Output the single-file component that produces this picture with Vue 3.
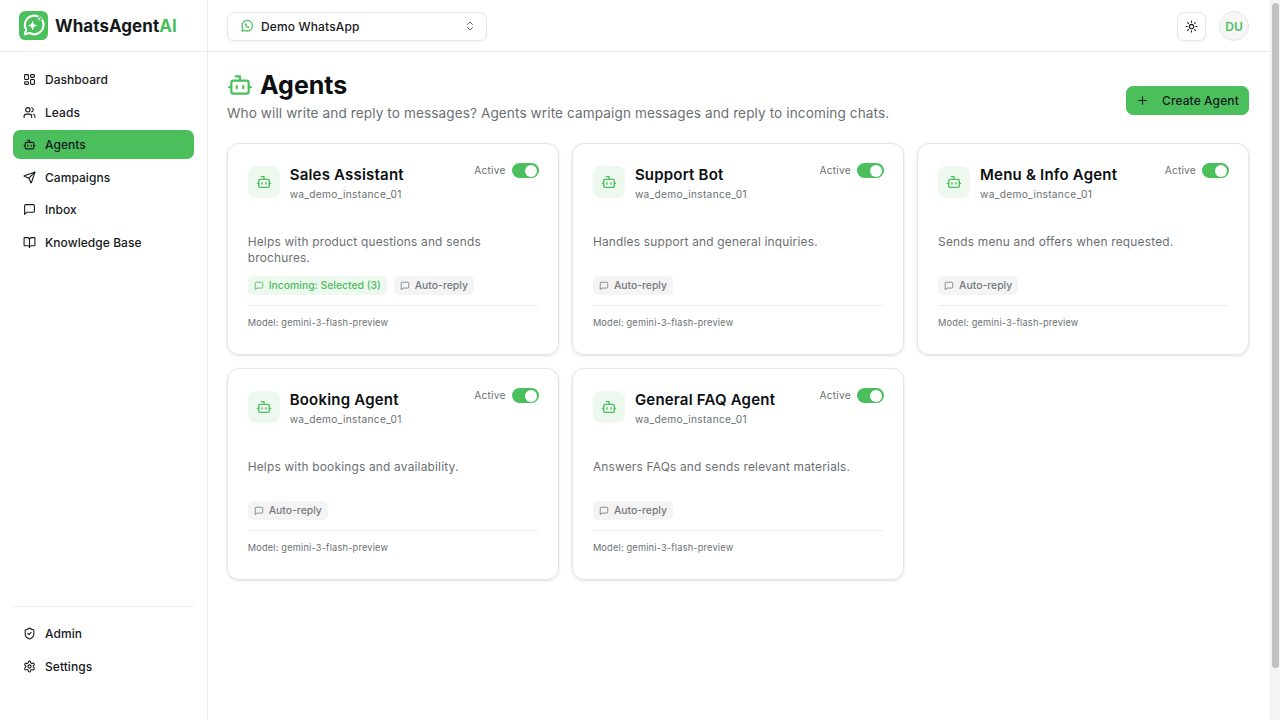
<script setup>
const navMain = [
  { label: 'Dashboard', icon: 'grid' },
  { label: 'Leads', icon: 'users' },
  { label: 'Agents', icon: 'bot', active: true },
  { label: 'Campaigns', icon: 'send' },
  { label: 'Inbox', icon: 'chat' },
  { label: 'Knowledge Base', icon: 'book' }
];
const navBottom = [
  { label: 'Admin', icon: 'shield' },
  { label: 'Settings', icon: 'gear' }
];
const agents = [
  { name: 'Sales Assistant', desc: 'Helps with product questions and sends brochures.', incoming: 'Incoming: Selected (3)' },
  { name: 'Support Bot', desc: 'Handles support and general inquiries.' },
  { name: 'Menu & Info Agent', desc: 'Sends menu and offers when requested.' },
  { name: 'Booking Agent', desc: 'Helps with bookings and availability.' },
  { name: 'General FAQ Agent', desc: 'Answers FAQs and sends relevant materials.' }
];
const icons = {
  grid: '<rect x="3" y="3" width="7" height="9" rx="1.5"/><rect x="14" y="3" width="7" height="5" rx="1.5"/><rect x="14" y="12" width="7" height="9" rx="1.5"/><rect x="3" y="16" width="7" height="5" rx="1.5"/>',
  users: '<path d="M16 21v-2a4 4 0 0 0-4-4H6a4 4 0 0 0-4 4v2"/><circle cx="9" cy="7" r="4"/><path d="M22 21v-2a4 4 0 0 0-3-3.87"/><path d="M16 3.13a4 4 0 0 1 0 7.75"/>',
  bot: '<path d="M12 8V4H8"/><rect x="4" y="8" width="16" height="12" rx="2"/><path d="M2 14h2"/><path d="M20 14h2"/><path d="M15 13v2"/><path d="M9 13v2"/>',
  send: '<path d="M14.5 21.7a.5.5 0 0 0 .9 0l6.5-19a.5.5 0 0 0-.6-.6l-19 6.5a.5.5 0 0 0 0 .9l7.9 3.2a2 2 0 0 1 1.1 1.1z"/><path d="m21.8 2.2-10.9 10.9"/>',
  chat: '<path d="M21 15a2 2 0 0 1-2 2H7l-4 4V5a2 2 0 0 1 2-2h14a2 2 0 0 1 2 2z"/>',
  book: '<path d="M12 7v14"/><path d="M3 18a1 1 0 0 1-1-1V4a1 1 0 0 1 1-1h5a4 4 0 0 1 4 4 4 4 0 0 1 4-4h5a1 1 0 0 1 1 1v13a1 1 0 0 1-1 1h-6a3 3 0 0 0-3 3 3 3 0 0 0-3-3z"/>',
  shield: '<path d="M20 13c0 5-3.5 7.5-7.7 9a1 1 0 0 1-.6 0C7.5 20.5 4 18 4 13V6a1 1 0 0 1 1-1c2 0 4.5-1.2 6.2-2.7a1.2 1.2 0 0 1 1.6 0C14.5 3.8 17 5 19 5a1 1 0 0 1 1 1z"/><path d="m9 12 2 2 4-4"/>',
  gear: '<path d="M12.2 2h-.4a2 2 0 0 0-2 2v.2a2 2 0 0 1-1 1.7l-.4.3a2 2 0 0 1-2 0l-.2-.1a2 2 0 0 0-2.7.7l-.2.4a2 2 0 0 0 .7 2.7l.2.1a2 2 0 0 1 1 1.7v.5a2 2 0 0 1-1 1.8l-.2.1a2 2 0 0 0-.7 2.7l.2.4a2 2 0 0 0 2.7.7l.2-.1a2 2 0 0 1 2 0l.4.3a2 2 0 0 1 1 1.7v.2a2 2 0 0 0 2 2h.4a2 2 0 0 0 2-2v-.2a2 2 0 0 1 1-1.7l.4-.3a2 2 0 0 1 2 0l.2.1a2 2 0 0 0 2.7-.7l.2-.4a2 2 0 0 0-.7-2.7l-.2-.1a2 2 0 0 1-1-1.8v-.5a2 2 0 0 1 1-1.7l.2-.1a2 2 0 0 0 .7-2.7l-.2-.4a2 2 0 0 0-2.7-.7l-.2.1a2 2 0 0 1-2 0l-.4-.3a2 2 0 0 1-1-1.7V4a2 2 0 0 0-2-2z"/><circle cx="12" cy="12" r="3"/>',
  sun: '<circle cx="12" cy="12" r="4"/><path d="M12 2v2"/><path d="M12 20v2"/><path d="m4.9 4.9 1.4 1.4"/><path d="m17.7 17.7 1.4 1.4"/><path d="M2 12h2"/><path d="M20 12h2"/><path d="m6.3 17.7-1.4 1.4"/><path d="m19.1 4.9-1.4 1.4"/>',
  updown: '<path d="m7 15 5 5 5-5"/><path d="m7 9 5-5 5 5"/>',
  plus: '<path d="M5 12h14"/><path d="M12 5v14"/>',
  wa: '<path d="M3.2 20.8 4.8 16.4A9 9 0 1 1 8 19.4z"/><path d="M8.8 9.2c0 3.3 2.7 6 6 6l1.2-1.7-2.2-1.1-1 .7c-.9-.4-1.6-1.2-2-2l.7-1-1.1-2.2z" fill="currentColor" stroke-width="1"/>'
};
</script>

<template>
  <div class="app">
    <aside class="sidebar">
      <div class="brand">
        <svg class="logo" viewBox="0 0 30 30">
          <rect width="30" height="30" rx="6.5" fill="#4abf5c" />
          <path d="M6 24l1.5-4.6A9.6 9.6 0 1 1 11 22.8z" fill="none" stroke="#fff" stroke-width="2.2" stroke-linejoin="round" />
          <path d="M14 10l1.4 3.6 3.6 1.4-3.6 1.4-1.4 3.6-1.4-3.6-3.6-1.4 3.6-1.4z" fill="#fff" />
          <path d="M21 5.5l.8 2 2 .8-2 .8-.8 2-.8-2-2-.8 2-.8z" fill="#fff" stroke="#4abf5c" stroke-width="1" />
        </svg>
        <span class="brand-name">WhatsAgent<em>AI</em></span>
      </div>
      <nav class="nav">
        <a v-for="item in navMain" :key="item.label" class="nav-item" :class="{ active: item.active }">
          <svg class="nav-icon" viewBox="0 0 24 24" v-html="icons[item.icon]"></svg>
          {{ item.label }}
        </a>
      </nav>
      <nav class="nav nav-bottom">
        <a v-for="item in navBottom" :key="item.label" class="nav-item">
          <svg class="nav-icon" viewBox="0 0 24 24" v-html="icons[item.icon]"></svg>
          {{ item.label }}
        </a>
      </nav>
    </aside>

    <div class="content">
      <header class="topbar">
        <button class="instance">
          <svg class="wa-icon" viewBox="0 0 24 24" v-html="icons.wa"></svg>
          <span>Demo WhatsApp</span>
          <svg class="updown" viewBox="0 0 24 24" v-html="icons.updown"></svg>
        </button>
        <div class="top-right">
          <button class="theme">
            <svg viewBox="0 0 24 24" v-html="icons.sun"></svg>
          </button>
          <div class="avatar">DU</div>
        </div>
      </header>

      <main class="main">
        <div class="page-head">
          <div>
            <h1>
              <svg viewBox="0 0 24 24" v-html="icons.bot"></svg>
              Agents
            </h1>
            <p>Who will write and reply to messages? Agents write campaign messages and reply to incoming chats.</p>
          </div>
          <button class="create">
            <svg viewBox="0 0 24 24" v-html="icons.plus"></svg>
            Create Agent
          </button>
        </div>

        <div class="grid">
          <article v-for="agent in agents" :key="agent.name" class="card">
            <div class="card-top">
              <div class="bot-box">
                <svg viewBox="0 0 24 24" v-html="icons.bot"></svg>
              </div>
              <div class="card-title">
                <h3>{{ agent.name }}</h3>
                <span>wa_demo_instance_01</span>
              </div>
              <div class="status">
                Active
                <span class="toggle"><i></i></span>
              </div>
            </div>
            <p class="desc">{{ agent.desc }}</p>
            <div class="tags">
              <span v-if="agent.incoming" class="tag tag-green">
                <svg viewBox="0 0 24 24" v-html="icons.chat"></svg>
                {{ agent.incoming }}
              </span>
              <span class="tag">
                <svg viewBox="0 0 24 24" v-html="icons.chat"></svg>
                Auto-reply
              </span>
            </div>
            <div class="model">Model: gemini-3-flash-preview</div>
          </article>
        </div>
      </main>
    </div>

    <div class="scrollbar"><div class="thumb"></div></div>
  </div>
</template>

<style>
html, body { margin: 0; height: 100%; overflow: hidden; background: #fff; }
</style>

<style scoped>
.app {
  display: flex;
  height: 720px;
  font-family: Inter, "Noto Sans", sans-serif;
  color: #16191c;
  background: #fff;
}
svg {
  fill: none;
  stroke: currentColor;
  stroke-width: 2;
  stroke-linecap: round;
  stroke-linejoin: round;
  flex: none;
}
.sidebar {
  width: 207px;
  flex: none;
  border-right: 1px solid #ececec;
  display: flex;
  flex-direction: column;
  padding-bottom: 39.5px;
  box-sizing: content-box;
}
.brand {
  height: 51px;
  display: flex;
  align-items: center;
  gap: 6px;
  padding-left: 19px;
  border-bottom: 1px solid #ececec;
}
.logo { width: 29px; height: 29px; stroke: none; margin-right: 1px; }
.brand-name { font-size: 17px; font-weight: 700; letter-spacing: 0.05px; }
.brand-name em { font-style: normal; color: #4abf5c; }
.nav {
  display: flex;
  flex-direction: column;
  gap: 3.5px;
  padding: 13px 13px 0;
  flex: 1;
}
.nav-bottom {
  flex: none;
  border-top: 1px solid #ececec;
  margin: 0 13px;
  padding: 12.5px 0 0;
}
.nav-item {
  height: 29px;
  display: flex;
  align-items: center;
  gap: 9px;
  padding-left: 10px;
  border-radius: 7px;
  font-size: 12px;
  font-weight: 500;
  letter-spacing: 0.05px;
}
.nav-item.active { background: #4abf5c; }
.nav-icon { width: 13px; height: 13px; }
.content { flex: 1; min-width: 0; display: flex; flex-direction: column; }
.topbar {
  height: 50px;
  flex: none;
  border-bottom: 1px solid #ececec;
  display: flex;
  align-items: center;
  justify-content: space-between;
  padding: 1px 21px 0 19px;
  box-sizing: content-box;
}
.instance {
  width: 260px;
  height: 29px;
  border: 1px solid #e6e6e6;
  border-radius: 7px;
  background: #fff;
  box-shadow: 0 1px 2px rgba(0, 0, 0, 0.05);
  display: flex;
  align-items: center;
  gap: 7px;
  padding: 0 10px 0 12px;
  font: 500 12px Inter, sans-serif;
  letter-spacing: 0.15px;
  color: #16191c;
}
.instance span { flex: 1; text-align: left; }
.wa-icon { width: 14px; height: 14px; color: #4abf5c; stroke-width: 2.2; }
.updown { width: 12px; height: 12px; color: #666; }
.top-right { display: flex; align-items: center; gap: 13px; }
.theme {
  width: 29px;
  height: 29px;
  border: 1px solid #e6e6e6;
  border-radius: 7px;
  background: #fff;
  box-shadow: 0 1px 2px rgba(0, 0, 0, 0.05);
  display: grid;
  place-items: center;
  padding: 0;
  color: #16191c;
}
.theme svg { width: 13px; height: 13px; }
.avatar {
  width: 28px;
  height: 28px;
  border: 1px solid #e6e6e6;
  border-radius: 50%;
  background: #f7f7f7;
  color: #4abf5c;
  font-size: 12px;
  font-weight: 600;
  display: grid;
  place-items: center;
}
.main { padding: 19px 21px 0 19px; }
.page-head {
  display: flex;
  justify-content: space-between;
  align-items: flex-start;
  margin-bottom: 20px;
}
h1 {
  margin: 0;
  display: flex;
  align-items: center;
  gap: 7px;
  font-size: 25px;
  line-height: 28px;
  font-weight: 700;
  color: #0c0f12;
}
h1 svg { width: 26px; height: 26px; color: #4abf5c; }
.page-head p { margin: 5px 0 0; font-size: 13.6px; line-height: 19px; color: #6b6f73; letter-spacing: 0.1px; }
.create {
  height: 29px;
  width: 123px;
  margin-top: 15px;
  border: 1px solid #4abf5c;
  border-radius: 7px;
  background: #4abf5c;
  color: #16191c;
  display: flex;
  align-items: center;
  gap: 13px;
  padding: 0 0 0 9px;
  font: 500 12px Inter, sans-serif;
  letter-spacing: 0.1px;
}
.create svg { width: 13px; height: 13px; }
.grid {
  display: grid;
  grid-template-columns: repeat(3, 1fr);
  gap: 13px 13.6px;
}
.card {
  height: 212px;
  box-sizing: border-box;
  border: 1px solid #e4e4e4;
  border-radius: 12px;
  box-shadow: 0 1px 3px rgba(0, 0, 0, 0.12);
  padding: 20px 20px 0 19.7px;
  display: flex;
  flex-direction: column;
}
.card-top { display: flex; align-items: flex-start; height: 70px; }
.bot-box {
  width: 32px;
  height: 32px;
  margin-top: 2px;
  border-radius: 8px;
  background: #edf8ef;
  color: #4abf5c;
  display: grid;
  place-items: center;
}
.bot-box svg { width: 16px; height: 16px; }
.card-title { flex: 1; padding-left: 10px; }
.card-title h3 { margin: 1px 0 0; font-size: 15px; line-height: 20px; font-weight: 600; color: #0c0f12; letter-spacing: 0.2px; }
.card-title span { display: block; margin-top: 2.5px; font-size: 10.2px; color: #6b6f73; letter-spacing: 0.3px; }
.status { display: flex; align-items: flex-start; gap: 6px; font-size: 10.2px; line-height: 13px; color: #6b6f73; margin: 0 -1px 0 0; letter-spacing: 0.2px; }
.toggle {
  width: 27px;
  height: 15px;
  margin-top: -1px;
  border-radius: 8px;
  background: #4abf5c;
  position: relative;
}
.toggle i {
  position: absolute;
  right: 1.5px;
  top: 1.5px;
  width: 12px;
  height: 12px;
  border-radius: 50%;
  background: #fff;
}
.desc { margin: 0; height: 42px; font-size: 11.9px; line-height: 16px; color: #6b6f73; letter-spacing: 0.2px; }
.tags { display: flex; gap: 6.8px; height: 29px; border-bottom: 1px solid #ececec; box-sizing: content-box; }
.tag {
  height: 19px;
  display: flex;
  align-items: center;
  gap: 5px;
  padding: 0 6px;
  border-radius: 5px;
  background: #f4f4f4;
  color: #75797c;
  font-size: 10.4px;
  font-weight: 500;
}
.tag svg { width: 10px; height: 10px; }
.tag-green { background: #edf8ef; color: #4abf5c; }
.model { margin-top: 10.5px; font-size: 9.2px; color: #6b6f73; letter-spacing: 0.2px; }
.scrollbar { width: 10px; flex: none; background: #f5f5f5; border-left: 1px solid #ececec; box-sizing: border-box; }
.thumb { margin: 3px 1px 0; height: 665px; border-radius: 4px; background: #c1c1c1; }
</style>
